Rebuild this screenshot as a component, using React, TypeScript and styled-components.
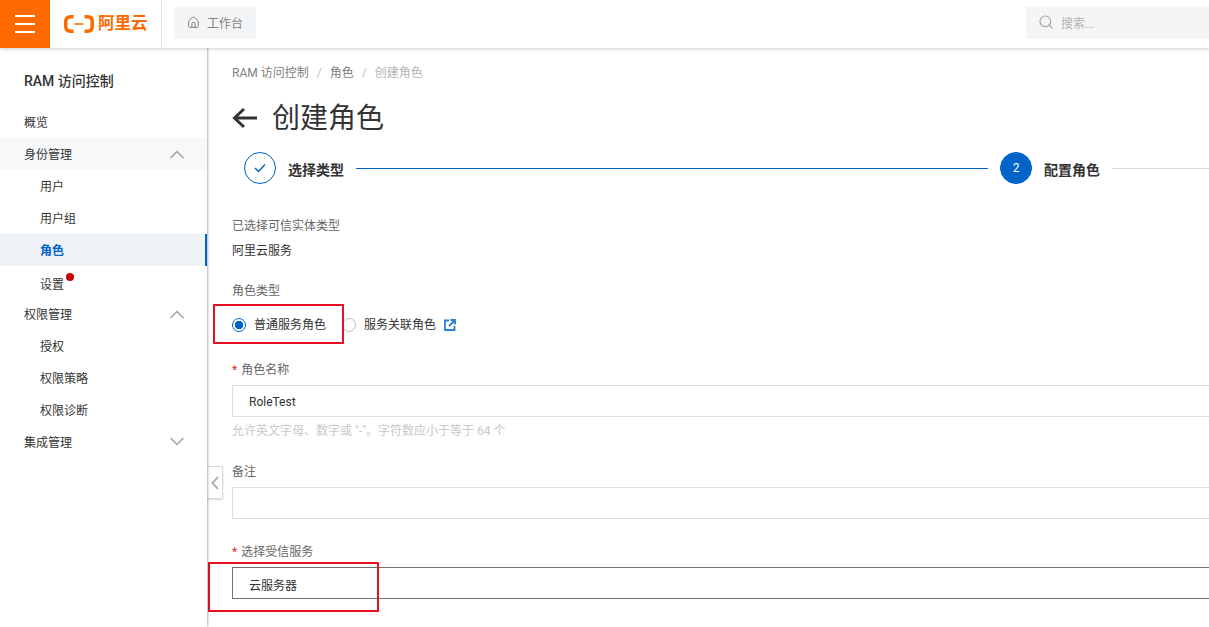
import React from 'react';
import styled, { createGlobalStyle } from 'styled-components';
import { House, Search } from 'lucide-react';

const FONT = 'Roboto, "Noto Sans CJK SC", sans-serif';

const GlobalStyle = createGlobalStyle`
  html, body {
    margin: 0;
    padding: 0;
    height: 100%;
    overflow: hidden;
    background: #fff;
  }
  body {
    font-family: ${FONT};
    font-size: 12px;
    color: #333;
  }
  * {
    box-sizing: border-box;
  }
`;

const nav = [
  { label: '概览', kind: 'top' },
  { label: '身份管理', kind: 'group', open: true },
  { label: '用户', kind: 'sub' },
  { label: '用户组', kind: 'sub' },
  { label: '角色', kind: 'sub', active: true },
  { label: '设置', kind: 'sub', dot: true },
  { label: '权限管理', kind: 'group', open: true },
  { label: '授权', kind: 'sub' },
  { label: '权限策略', kind: 'sub' },
  { label: '权限诊断', kind: 'sub' },
  { label: '集成管理', kind: 'group', open: false },
];

const Caret = ({ up }: { up?: boolean }) => (
  <svg width="16" height="10" viewBox="0 0 16 10" fill="none">
    <path d={up ? 'M1.500 9L8 2.500L14.500 9' : 'M1.500 1L8 7.500L14.500 1'} stroke="#a3a3a3" strokeWidth="1.500" />
  </svg>
);

export default function App() {
  return (
    <>
      <GlobalStyle />
      <Page>
        <TopBar>
          <MenuButton aria-label="菜单">
            <span />
            <span />
            <span />
          </MenuButton>
          <LogoArea>
            <svg width="30" height="18" viewBox="0 0 30 18" fill="none">
              <path
                d="M9.500 1.800H6.500C3.500 1.800 1.800 3.500 1.800 6.500V11.500C1.800 14.500 3.500 16.200 6.500 16.200H9.500M20.500 1.800H23.500C26.500 1.800 28.200 3.500 28.200 6.500V11.500C28.200 14.500 26.500 16.200 23.500 16.200H20.500"
                stroke="#ff6a00"
                strokeWidth="3.500"
              />
              <path d="M10.500 9H19.500" stroke="#ff6a00" strokeWidth="1.600" />
            </svg>
            <LogoText>阿里云</LogoText>
          </LogoArea>
          <Workbench>
            <House size={13} strokeWidth={1.8} color="#808080" />
            工作台
          </Workbench>
          <SearchBox>
            <Search size={16} strokeWidth={1.7} color="#a6a6a6" />
            搜索...
          </SearchBox>
        </TopBar>

        <Body>
          <Sidebar>
            <SideTitle>RAM 访问控制</SideTitle>
            {nav.map((item) => (
              <NavRow
                key={item.label}
                $kind={item.kind}
                $active={item.active}
                $shaded={item.label === '身份管理'}
                $low={item.dot}
              >
                <NavLabel>
                  {item.label}
                  {item.dot && <RedDot />}
                </NavLabel>
                {item.kind === 'group' && <Caret up={item.open} />}
              </NavRow>
            ))}
          </Sidebar>

          <CollapseTab>
            <svg width="8" height="14" viewBox="0 0 8 14" fill="none">
              <path d="M7 1L1.500 7L7 13" stroke="#a6a6a6" strokeWidth="1.800" />
            </svg>
          </CollapseTab>

          <Main>
            <Breadcrumb>
              <span>RAM 访问控制</span>
              <Slash>/</Slash>
              <span>角色</span>
              <Slash>/</Slash>
              <CrumbCurrent>创建角色</CrumbCurrent>
            </Breadcrumb>

            <TitleRow>
              <BackArrow width="26" height="22" viewBox="0 0 26 22" fill="none">
                <path d="M25 11H3M12 2L2.500 11L12 20" stroke="#333" strokeWidth="3" />
              </BackArrow>
              <PageTitle>创建角色</PageTitle>
            </TitleRow>

            <Steps>
              <StepCircle>
                <svg width="12" height="10" viewBox="0 0 12 10" fill="none">
                  <path d="M1 5L4.500 8.500L11 1.500" stroke="#0064c8" strokeWidth="1.500" />
                </svg>
              </StepCircle>
              <StepLabel>选择类型</StepLabel>
              <StepLine $width={632} $color="#0064c8" />
              <StepCircle $filled $gap={12}>2</StepCircle>
              <StepLabel>配置角色</StepLabel>
              <StepLine $width={300} $color="#d9d9d9" />
            </Steps>

            <Form>
              <FieldLabel>已选择可信实体类型</FieldLabel>
              <ValueText>阿里云服务</ValueText>

              <FieldLabel $top={20}>角色类型</FieldLabel>
              <RadioRow>
                <RadioItem>
                  <Radio $checked />
                  普通服务角色
                </RadioItem>
                <RadioItem>
                  <Radio />
                  服务关联角色
                  <svg width="12" height="12" viewBox="0 0 12 12" fill="none">
                    <path
                      d="M5 1.500H1V11H10.500V7M6.500 1H11V5.500M11 1L5 7"
                      stroke="#2b7fd6"
                      strokeWidth="1.800"
                    />
                  </svg>
                </RadioItem>
              </RadioRow>

              <FieldLabel $top={24}>
                <Required>*</Required>角色名称
              </FieldLabel>
              <InputBox>RoleTest</InputBox>
              <HelpText>允许英文字母、数字或 "-"。字符数应小于等于 64 个</HelpText>

              <FieldLabel $top={21}>备注</FieldLabel>
              <InputBox />

              <FieldLabel $top={22}>
                <Required>*</Required>选择受信服务
              </FieldLabel>
              <InputBox $focused>云服务器</InputBox>
            </Form>

            <RedFrame $left={6} $top={256} $width={131} $height={40} />
            <RedFrame $left={1} $top={514} $width={171} $height={50} />
          </Main>
        </Body>
      </Page>
    </>
  );
}

const Page = styled.div`
  width: 1209px;
  height: 627px;
  overflow: hidden;
  display: flex;
  flex-direction: column;
`;

const TopBar = styled.header`
  position: relative;
  z-index: 3;
  flex: none;
  height: 48px;
  display: flex;
  align-items: center;
  background: #fff;
  box-shadow: 0 1px 4px rgba(0, 0, 0, 0.2);
`;

const MenuButton = styled.div`
  width: 50px;
  height: 48px;
  background: #ff6a00;
  display: flex;
  flex-direction: column;
  justify-content: center;
  align-items: center;
  gap: 6px;

  span {
    display: block;
    width: 20px;
    height: 2px;
    background: #fff;
  }
`;

const LogoArea = styled.div`
  width: 112px;
  height: 48px;
  padding-left: 14px;
  display: flex;
  align-items: center;
  gap: 4px;
  border-right: 1px solid #e6e6e6;
`;

const LogoText = styled.span`
  font-size: 16.500px;
  font-weight: 700;
  color: #ff6a00;
  line-height: 20px;
  white-space: nowrap;
`;

const Workbench = styled.div`
  width: 82px;
  height: 32px;
  margin: 0 0 2px 12px;
  padding: 0 0 2px 13px;
  display: flex;
  align-items: center;
  gap: 7px;
  background: #f4f5f7;
  border-radius: 2px;
  color: #808080;
`;

const SearchBox = styled.div`
  width: 183px;
  height: 32px;
  margin: 0 0 2px auto;
  padding: 0 0 2px 12px;
  display: flex;
  align-items: center;
  gap: 7px;
  background: #f4f5f7;
  color: #b3b3b3;
`;

const Body = styled.div`
  position: relative;
  flex: 1;
  display: flex;
  min-height: 0;
`;

const Sidebar = styled.nav`
  position: relative;
  z-index: 2;
  flex: none;
  width: 207px;
  background: #fff;
  box-shadow: 1px 0 2px rgba(0, 0, 0, 0.3);
`;

const SideTitle = styled.div`
  height: 58px;
  padding: 22px 0 0 24px;
  font-size: 14px;
  line-height: 22px;
  font-weight: 500;
  color: #333;
`;

const NavRow = styled.div<{ $kind: string; $active?: boolean; $shaded?: boolean; $low?: boolean }>`
  height: 32px;
  display: flex;
  align-items: center;
  justify-content: space-between;
  padding: ${(p) => (p.$low ? '4px' : '0')} 20px 0 ${(p) => (p.$kind === 'sub' ? '40px' : '24px')};
  background: ${(p) => (p.$active ? '#eff3f8' : p.$shaded ? '#f7f8fa' : 'transparent')};
  border-right: 2px solid ${(p) => (p.$active ? '#0064c8' : 'transparent')};
  color: ${(p) => (p.$active ? '#0064c8' : '#333')};
  font-weight: ${(p) => (p.$active ? 700 : 400)};
`;

const NavLabel = styled.span`
  position: relative;
  margin-bottom: 2px;
`;

const RedDot = styled.i`
  position: absolute;
  top: -2px;
  right: -10px;
  width: 8px;
  height: 8px;
  border-radius: 50%;
  background: #c80000;
`;

const CollapseTab = styled.div`
  position: absolute;
  z-index: 1;
  left: 207px;
  top: 418px;
  width: 16px;
  height: 33px;
  display: flex;
  align-items: center;
  justify-content: center;
  background: #fff;
  border: 1px solid #d9d9d9;
  border-left: none;
  box-shadow: 0 1px 2px rgba(0, 0, 0, 0.15);
`;

const Main = styled.main`
  position: relative;
  flex: 1;
  min-width: 0;
  padding: 14px 0 0 25px;
  overflow: hidden;
`;

const Breadcrumb = styled.div`
  height: 20px;
  display: flex;
  align-items: center;
  padding-top: 2px;
  color: #808080;
  line-height: 20px;
  white-space: nowrap;
`;

const Slash = styled.span`
  width: 21px;
  text-align: center;
  color: #c1c1c1;
`;

const CrumbCurrent = styled.span`
  color: #b3b3b3;
`;

const TitleRow = styled.div`
  margin-top: 20px;
  height: 34px;
  display: flex;
  align-items: center;
  gap: 14px;
`;

const BackArrow = styled.svg`
  flex: none;
  margin-bottom: 2px;
`;

const PageTitle = styled.h1`
  margin: 0;
  font-size: 28px;
  line-height: 34px;
  font-weight: 400;
  color: #333;
`;

const Steps = styled.div`
  margin-top: 16px;
  padding-left: 12px;
  height: 32px;
  width: 1200px;
  display: flex;
  align-items: center;
`;

const StepCircle = styled.div<{ $filled?: boolean; $gap?: number }>`
  flex: none;
  width: 32px;
  height: 32px;
  margin-left: ${(p) => p.$gap ?? 0}px;
  border-radius: 50%;
  display: flex;
  align-items: center;
  justify-content: center;
  border: 1px solid #0064c8;
  background: ${(p) => (p.$filled ? '#0064c8' : '#fff')};
  color: #fff;
`;

const StepLabel = styled.span`
  flex: none;
  margin: 4px 12px 0;
  font-size: 14px;
  line-height: 20px;
  font-weight: 700;
  color: #333;
`;

const StepLine = styled.div<{ $width: number; $color: string }>`
  flex: none;
  width: ${(p) => p.$width}px;
  height: 1px;
  background: ${(p) => p.$color};
`;

const Form = styled.div`
  margin-top: 31px;
  width: 1200px;
`;

const FieldLabel = styled.div<{ $top?: number }>`
  margin-top: ${(p) => p.$top ?? 0}px;
  height: 20px;
  line-height: 22px;
  color: #666;
`;

const Required = styled.span`
  margin-right: 4px;
  color: #d93026;
`;

const ValueText = styled.div`
  margin-top: 5px;
  height: 20px;
  line-height: 22px;
  color: #333;
`;

const RadioRow = styled.div`
  margin-top: 15px;
  height: 20px;
  display: flex;
  align-items: center;
  gap: 16px;
`;

const RadioItem = styled.label`
  display: flex;
  align-items: center;
  gap: 8px;
  color: #333;
  line-height: 22px;
`;

const Radio = styled.span<{ $checked?: boolean }>`
  flex: none;
  width: 14px;
  height: 14px;
  border-radius: 50%;
  border: 1px solid ${(p) => (p.$checked ? '#0064c8' : '#c1c1c1')};
  background: ${(p) => (p.$checked ? 'radial-gradient(circle, #0064c8 0 4px, #fff 4.5px)' : '#fff')};
`;

const InputBox = styled.div<{ $focused?: boolean }>`
  margin-top: 6px;
  height: 32px;
  padding: 2px 0 0 16px;
  display: flex;
  align-items: center;
  border: 1px solid ${(p) => (p.$focused ? '#737373' : '#dedede')};
  color: #333;
`;

const HelpText = styled.div`
  margin-top: 3px;
  height: 20px;
  line-height: 22px;
  color: #c8c8c8;
`;

const RedFrame = styled.div<{ $left: number; $top: number; $width: number; $height: number }>`
  position: absolute;
  left: ${(p) => p.$left}px;
  top: ${(p) => p.$top}px;
  width: ${(p) => p.$width}px;
  height: ${(p) => p.$height}px;
  border: 2px solid #e81123;
  pointer-events: none;
`;
